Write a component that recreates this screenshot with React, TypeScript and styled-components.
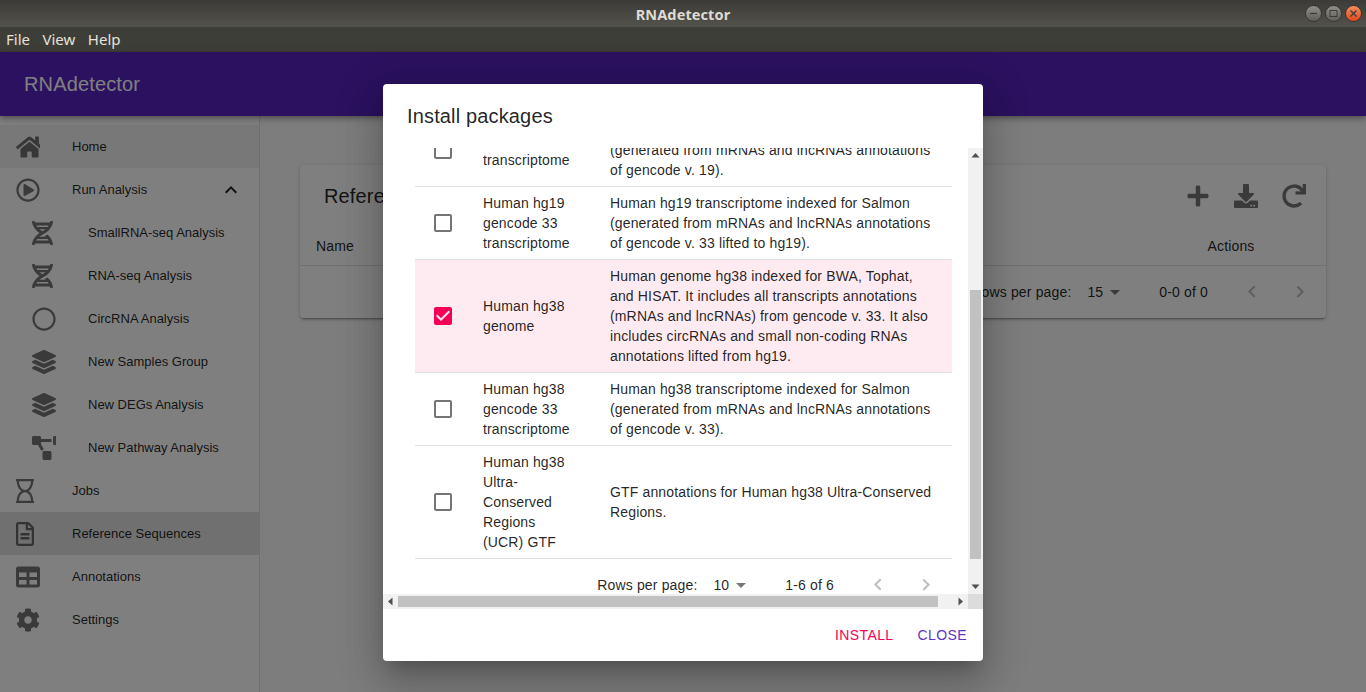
import React from "react";
import styled, { createGlobalStyle } from "styled-components";
import {
  FaCog,
  FaDna,
  FaDownload,
  FaHome,
  FaLayerGroup,
  FaPlus,
  FaProjectDiagram,
  FaRedo,
  FaRegCircle,
  FaRegFileAlt,
  FaRegHourglass,
  FaRegPlayCircle,
  FaTable,
} from "react-icons/fa";

const GlobalStyle = createGlobalStyle`
  html, body {
    margin: 0;
    height: 100%;
    overflow: hidden;
  }
  body {
    font-family: "Liberation Sans", Arial, sans-serif;
    color: rgba(0, 0, 0, 0.87);
  }
  * {
    box-sizing: border-box;
  }
`;

const Window = styled.div`
  display: flex;
  flex-direction: column;
  width: 1366px;
  height: 692px;
  overflow: hidden;
`;

const TitleBar = styled.div`
  display: flex;
  align-items: center;
  justify-content: center;
  position: relative;
  height: 27px;
  flex: none;
  background: linear-gradient(#3c3b37, #54524c);
  color: #dfdbd2;
  font-family: "Noto Sans", sans-serif;
  font-size: 14.5px;
  font-weight: 700;
  letter-spacing: 0.1px;
`;

const WindowButtons = styled.div`
  position: absolute;
  top: 5px;
  right: 4px;
  display: flex;
  gap: 3px;
`;

const WindowButton = styled.div<{ $close?: boolean }>`
  display: flex;
  align-items: center;
  justify-content: center;
  width: 17px;
  height: 17px;
  border-radius: 50%;
  border: 1px solid #35342f;
  background: ${({ $close }) =>
    $close
      ? "linear-gradient(#f58d5f, #df4a17)"
      : "linear-gradient(#908f89, #5f5e58)"};
`;

const MenuBar = styled.div`
  display: flex;
  align-items: center;
  gap: 12.5px;
  height: 25px;
  flex: none;
  padding: 0 0 2px 6px;
  background: #3e3e38;
  color: #e6e2d9;
  font-family: "Noto Sans", sans-serif;
  font-size: 15px;
`;

const Page = styled.div`
  position: relative;
  display: flex;
  flex-direction: column;
  flex: 1;
  min-height: 0;
  background: #fafafa;
`;

const AppBar = styled.header`
  display: flex;
  align-items: center;
  height: 64px;
  flex: none;
  padding-left: 24px;
  background: #5623be;
  color: #fff;
  font-size: 20px;
  letter-spacing: 0.15px;
  position: relative;
  z-index: 1;
  box-shadow: 0 2px 4px -1px rgba(0, 0, 0, 0.2), 0 4px 5px 0 rgba(0, 0, 0, 0.14),
    0 1px 10px 0 rgba(0, 0, 0, 0.12);
`;

const Body = styled.div`
  display: flex;
  flex: 1;
  min-height: 0;
`;

const Sidebar = styled.nav`
  width: 260px;
  flex: none;
  padding-top: 9px;
  background: #fff;
  border-right: 1px solid rgba(0, 0, 0, 0.12);
`;

const NavItem = styled.div<{ $nested?: boolean; $shade?: number }>`
  display: flex;
  align-items: center;
  height: 43px;
  padding: 0 16px 0 ${({ $nested }) => ($nested ? "32px" : "16px")};
  font-size: 13px;
  background: rgba(0, 0, 0, ${({ $shade }) => $shade ?? 0});
`;

/* the glyphs keep their own width and get cut at 24px, wide ones lose their right edge */
const NavIcon = styled.span<{ $width: number }>`
  display: flex;
  align-items: center;
  width: 24px;
  height: 24px;
  flex: none;
  margin-right: 32px;
  overflow: hidden;
  color: rgba(0, 0, 0, 0.54);

  svg {
    flex: none;
    height: 24px;
    width: ${({ $width }) => $width}px;
  }
`;

const NavLabel = styled.span`
  flex: 1;
`;

const Main = styled.main`
  flex: 1;
  padding: 49px 40px 0;
`;

const Card = styled.section`
  background: #fff;
  border-radius: 4px;
  box-shadow: 0 3px 1px -2px rgba(0, 0, 0, 0.2), 0 2px 2px 0 rgba(0, 0, 0, 0.14),
    0 1px 5px 0 rgba(0, 0, 0, 0.12);
`;

const CardToolbar = styled.div`
  display: flex;
  align-items: center;
  justify-content: space-between;
  height: 62px;
  padding: 0 8px 0 24px;
  font-size: 20px;
  letter-spacing: 0.15px;
`;

const ToolbarActions = styled.div`
  display: flex;
`;

const ActionButton = styled.span`
  display: flex;
  align-items: center;
  justify-content: center;
  width: 48px;
  height: 48px;
  color: rgba(0, 0, 0, 0.54);

  svg {
    width: 24px;
    height: 24px;
  }
`;

const CardHead = styled.div`
  display: flex;
  align-items: flex-end;
  justify-content: space-between;
  height: 39px;
  padding: 0 71.5px 9px 16px;
  border-bottom: 1px solid rgba(224, 224, 224, 1);
  font-size: 14px;
  line-height: 20px;
  letter-spacing: 0.15px;
`;

const PaginationRow = styled.div`
  display: flex;
  align-items: center;
  justify-content: flex-end;
  height: 52px;
  flex: none;
  padding-right: 2px;
  font-size: 14px;
  letter-spacing: 0.15px;
  white-space: nowrap;
`;

const SelectBox = styled.span`
  display: flex;
  align-items: center;
  margin: 0 32px 0 16px;
  color: rgba(0, 0, 0, 0.87);

  svg {
    color: rgba(0, 0, 0, 0.54);
  }
`;

const PageActions = styled.span`
  display: flex;
  margin-left: 20px;
`;

const PageArrow = styled.span`
  display: flex;
  align-items: center;
  justify-content: center;
  width: 48px;
  height: 48px;
  color: rgba(0, 0, 0, 0.26);
`;

const Backdrop = styled.div`
  position: absolute;
  inset: 0;
  z-index: 2;
  display: flex;
  align-items: center;
  justify-content: center;
  background: rgba(0, 0, 0, 0.5);
`;

const Dialog = styled.div`
  display: flex;
  flex-direction: column;
  width: 600px;
  height: 577px;
  background: #fff;
  border-radius: 4px;
  overflow: hidden;
  box-shadow: 0 11px 15px -7px rgba(0, 0, 0, 0.2),
    0 24px 38px 3px rgba(0, 0, 0, 0.14), 0 9px 46px 8px rgba(0, 0, 0, 0.12);
`;

const DialogTitle = styled.h2`
  display: flex;
  align-items: center;
  height: 64px;
  flex: none;
  margin: 0;
  padding: 1px 24px 0;
  font-size: 20px;
  font-weight: 400;
  letter-spacing: 0.15px;
`;

const ScrollArea = styled.div`
  display: grid;
  grid-template-columns: 585px 15px;
  grid-template-rows: 446px 15px;
  flex: none;
`;

const Viewport = styled.div`
  overflow: hidden;
  padding: 0 16px 0 32px;
`;

const PackageTable = styled.div`
  margin-top: -34px;
`;

const PackageRow = styled.div<{ $selected?: boolean }>`
  display: grid;
  grid-template-columns: 52px 127px 1fr;
  align-items: center;
  padding: 6px 0;
  font-size: 14px;
  line-height: 20px;
  letter-spacing: 0.15px;
  border-bottom: 1px solid rgba(224, 224, 224, 1);
  background: ${({ $selected }) =>
    $selected ? "rgba(245, 0, 87, 0.08)" : "transparent"};
`;

const CheckCell = styled.div<{ $checked?: boolean }>`
  display: flex;
  padding-left: 16px;
  color: ${({ $checked }) => ($checked ? "#f50057" : "rgba(0, 0, 0, 0.54)")};
`;

const NameCell = styled.div`
  padding: 0 16px;
`;

const DescriptionCell = styled.div`
  padding: 0 16px;
`;

const VerticalBar = styled.div`
  display: flex;
  flex-direction: column;
  align-items: center;
  background: #f1f1f1;
`;

const HorizontalBar = styled.div`
  display: flex;
  align-items: center;
  background: #f1f1f1;
`;

const ScrollCorner = styled.div`
  background: #dcdcdc;
`;

const ArrowCell = styled.span`
  display: flex;
  align-items: center;
  justify-content: center;
  width: 15px;
  height: 15px;
  flex: none;
  color: #505050;
`;

const VerticalThumb = styled.div`
  width: 11px;
  height: 269px;
  margin: 127px 0 20px;
  background: #c1c1c1;
`;

const HorizontalThumb = styled.div`
  width: 540px;
  height: 11px;
  background: #c1c1c1;
`;

const HorizontalTrack = styled.div`
  display: flex;
  flex: 1;
`;

const DialogFooter = styled.div`
  display: flex;
  justify-content: flex-end;
  align-items: center;
  gap: 8px;
  flex: 1;
  padding: 0 8px;
`;

const TextButton = styled.span<{ $color: string }>`
  padding: 6px 8px;
  font-size: 14px;
  line-height: 24px;
  letter-spacing: 0.4px;
  text-transform: uppercase;
  color: ${({ $color }) => $color};
`;

const MuiIcon = ({ d }: { d: string }) => (
  <svg width="24" height="24" viewBox="0 0 24 24" fill="currentColor">
    <path d={d} />
  </svg>
);

const ARROW_DROP = "M7 10l5 5 5-5z";
const ARROW_LEFT = "M15.41 16.09l-4.58-4.59 4.58-4.59L14 5.5l-6 6 6 6z";
const ARROW_RIGHT = "M8.59 16.34l4.58-4.59-4.58-4.59L10 5.75l6 6-6 6z";
const EXPAND_LESS = "M12 8l-6 6 1.41 1.41L12 10.83l4.59 4.58L18 14z";
const BOX_EMPTY =
  "M19 5v14H5V5h14m0-2H5c-1.1 0-2 .9-2 2v14c0 1.1.9 2 2 2h14c1.1 0 2-.9 2-2V5c0-1.1-.9-2-2-2z";
const BOX_CHECKED =
  "M19 3H5c-1.1 0-2 .9-2 2v14c0 1.1.9 2 2 2h14c1.1 0 2-.9 2-2V5c0-1.1-.9-2-2-2zm-9 14l-5-5 1.41-1.41L10 14.17l7.59-7.59L19 8l-9 9z";

const Pagination = ({ size, range }: { size: number; range: string }) => (
  <PaginationRow>
    <span>Rows per page:</span>
    <SelectBox>
      {size}
      <MuiIcon d={ARROW_DROP} />
    </SelectBox>
    <span>{range}</span>
    <PageActions>
      <PageArrow>
        <MuiIcon d={ARROW_LEFT} />
      </PageArrow>
      <PageArrow>
        <MuiIcon d={ARROW_RIGHT} />
      </PageArrow>
    </PageActions>
  </PaginationRow>
);

const navItems = [
  { label: "Home", icon: <FaHome />, width: 27, shade: 0.06 },
  { label: "Run Analysis", icon: <FaRegPlayCircle />, width: 24, open: true },
  { label: "SmallRNA-seq Analysis", icon: <FaDna />, width: 21, nested: true },
  { label: "RNA-seq Analysis", icon: <FaDna />, width: 21, nested: true },
  { label: "CircRNA Analysis", icon: <FaRegCircle />, width: 24, nested: true },
  { label: "New Samples Group", icon: <FaLayerGroup />, width: 24, nested: true },
  { label: "New DEGs Analysis", icon: <FaLayerGroup />, width: 24, nested: true },
  { label: "New Pathway Analysis", icon: <FaProjectDiagram />, width: 30, nested: true },
  { label: "Jobs", icon: <FaRegHourglass />, width: 18 },
  { label: "Reference Sequences", icon: <FaRegFileAlt />, width: 18, shade: 0.12 },
  { label: "Annotations", icon: <FaTable />, width: 24 },
  { label: "Settings", icon: <FaCog />, width: 24 },
];

const packages = [
  {
    name: "Human hg19 transcriptome",
    description:
      "Human hg19 transcriptome indexed for Salmon (generated from mRNAs and lncRNAs annotations of gencode v. 19).",
  },
  {
    name: "Human hg19 gencode 33 transcriptome",
    description:
      "Human hg19 transcriptome indexed for Salmon (generated from mRNAs and lncRNAs annotations of gencode v. 33 lifted to hg19).",
  },
  {
    name: "Human hg38 genome",
    description:
      "Human genome hg38 indexed for BWA, Tophat, and HISAT. It includes all transcripts annotations (mRNAs and lncRNAs) from gencode v. 33. It also includes circRNAs and small non-coding RNAs annotations lifted from hg19.",
    checked: true,
  },
  {
    name: "Human hg38 gencode 33 transcriptome",
    description:
      "Human hg38 transcriptome indexed for Salmon (generated from mRNAs and lncRNAs annotations of gencode v. 33).",
  },
  {
    name: "Human hg38 Ultra-Conserved Regions (UCR) GTF",
    description: "GTF annotations for Human hg38 Ultra-Conserved Regions.",
  },
];

const Triangle = ({ points }: { points: string }) => (
  <svg width="9" height="9" viewBox="0 0 9 9" fill="currentColor">
    <polygon points={points} />
  </svg>
);

export default function App() {
  return (
    <Window>
      <GlobalStyle />
      <TitleBar>
        RNAdetector
        <WindowButtons>
          <WindowButton>
            <svg width="9" height="9" viewBox="0 0 9 9">
              <path d="M1 4.5h7" stroke="#3c3b37" strokeWidth="1.2" />
            </svg>
          </WindowButton>
          <WindowButton>
            <svg width="9" height="9" viewBox="0 0 9 9" fill="none">
              <rect x="1" y="1.5" width="7" height="6" stroke="#3c3b37" />
            </svg>
          </WindowButton>
          <WindowButton $close>
            <svg width="9" height="9" viewBox="0 0 9 9">
              <path d="M1.5 1.5l6 6M7.5 1.5l-6 6" stroke="#3c3b37" strokeWidth="1.3" />
            </svg>
          </WindowButton>
        </WindowButtons>
      </TitleBar>
      <MenuBar>
        <span>File</span>
        <span>View</span>
        <span>Help</span>
      </MenuBar>
      <Page>
        <AppBar>RNAdetector</AppBar>
        <Body>
          <Sidebar>
            {navItems.map((item) => (
              <NavItem key={item.label} $nested={item.nested} $shade={item.shade}>
                <NavIcon $width={item.width}>{item.icon}</NavIcon>
                <NavLabel>{item.label}</NavLabel>
                {item.open && <MuiIcon d={EXPAND_LESS} />}
              </NavItem>
            ))}
          </Sidebar>
          <Main>
            <Card>
              <CardToolbar>
                <span>Reference Sequences</span>
                <ToolbarActions>
                  <ActionButton>
                    <FaPlus />
                  </ActionButton>
                  <ActionButton>
                    <FaDownload />
                  </ActionButton>
                  <ActionButton>
                    <FaRedo />
                  </ActionButton>
                </ToolbarActions>
              </CardToolbar>
              <CardHead>
                <span>Name</span>
                <span>Actions</span>
              </CardHead>
              <Pagination size={15} range="0-0 of 0" />
            </Card>
          </Main>
        </Body>
        <Backdrop>
          <Dialog>
            <DialogTitle>Install packages</DialogTitle>
            <ScrollArea>
              <Viewport>
                <PackageTable>
                  {packages.map((pkg) => (
                    <PackageRow key={pkg.name} $selected={pkg.checked}>
                      <CheckCell $checked={pkg.checked}>
                        <MuiIcon d={pkg.checked ? BOX_CHECKED : BOX_EMPTY} />
                      </CheckCell>
                      <NameCell>{pkg.name}</NameCell>
                      <DescriptionCell>{pkg.description}</DescriptionCell>
                    </PackageRow>
                  ))}
                  <Pagination size={10} range="1-6 of 6" />
                </PackageTable>
              </Viewport>
              <VerticalBar>
                <ArrowCell>
                  <Triangle points="4.5,2 8.5,6.5 0.5,6.5" />
                </ArrowCell>
                <VerticalThumb />
                <ArrowCell>
                  <Triangle points="0.5,2.5 8.5,2.5 4.5,7" />
                </ArrowCell>
              </VerticalBar>
              <HorizontalBar>
                <ArrowCell>
                  <Triangle points="2,4.5 6.5,0.5 6.5,8.5" />
                </ArrowCell>
                <HorizontalTrack>
                  <HorizontalThumb />
                </HorizontalTrack>
                <ArrowCell>
                  <Triangle points="2.5,0.5 7,4.5 2.5,8.5" />
                </ArrowCell>
              </HorizontalBar>
              <ScrollCorner />
            </ScrollArea>
            <DialogFooter>
              <TextButton $color="#f50057">Install</TextButton>
              <TextButton $color="#5e35c4">Close</TextButton>
            </DialogFooter>
          </Dialog>
        </Backdrop>
      </Page>
    </Window>
  );
}
